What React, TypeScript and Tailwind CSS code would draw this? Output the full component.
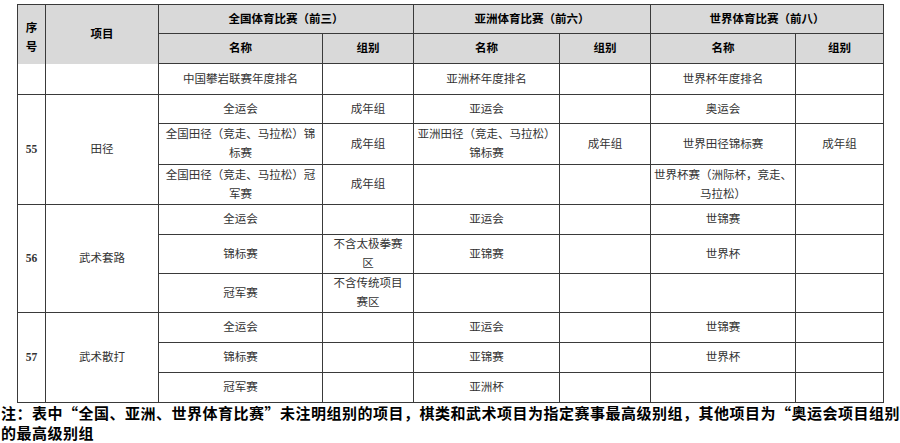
import React from 'react';

const body = "font-['Liberation_Serif','Noto_Sans_CJK_SC',serif]";

// one cell of the body, text centred, explicit line breaks
function Cell({
  lines,
  rowSpan,
  className = '',
}: {
  lines?: string[];
  rowSpan?: number;
  className?: string;
}) {
  return (
    <td
      rowSpan={rowSpan}
      className={`border border-[#3a3a3a] p-0 text-center align-middle whitespace-nowrap text-[11.5px] leading-[19px] text-[#333] ${className}`}
    >
      {lines?.map((l, i) => (
        <React.Fragment key={i}>
          {i > 0 && <br />}
          {l}
        </React.Fragment>
      ))}
    </td>
  );
}

function Head({
  children,
  rowSpan,
  colSpan,
  className = '',
}: {
  children: React.ReactNode;
  rowSpan?: number;
  colSpan?: number;
  className?: string;
}) {
  return (
    <th
      rowSpan={rowSpan}
      colSpan={colSpan}
      className={`border border-[#3a3a3a] bg-[#d9d9d9] text-center align-middle text-[11.5px] leading-[19px] font-bold text-black ${className}`}
    >
      {children}
    </th>
  );
}

export default function App() {
  return (
    <div className={`w-[900px] h-[443px] bg-white overflow-hidden ${body}`}>
      <table className="ml-[17px] mt-[4px] w-[866px] table-fixed border-collapse">
        <colgroup>
          <col className="w-[28px]" />
          <col className="w-[113px]" />
          <col className="w-[164px]" />
          <col className="w-[91px]" />
          <col className="w-[146px]" />
          <col className="w-[91px]" />
          <col className="w-[145px]" />
          <col className="w-[88px]" />
        </colgroup>
        <thead>
          <tr className="h-[29px]">
            <Head rowSpan={2} className="border-b-0 px-0 pt-[8px] pb-0">
              序<br />号
            </Head>
            <Head rowSpan={2} className="border-b-0 p-0">
              项目
            </Head>
            <Head colSpan={2} className="p-0">全国体育比赛（前三）</Head>
            <Head colSpan={2} className="p-0">亚洲体育比赛（前六）</Head>
            <Head colSpan={2} className="p-0">世界体育比赛（前八）</Head>
          </tr>
          <tr className="h-[30px]">
            <Head className="p-0">名称</Head>
            <Head className="p-0">组别</Head>
            <Head className="p-0">名称</Head>
            <Head className="p-0">组别</Head>
            <Head className="p-0">名称</Head>
            <Head className="p-0">组别</Head>
          </tr>
        </thead>
        <tbody>
          <tr className="h-[31px]">
            <Cell className="border-t-0" />
            <Cell className="border-t-0" />
            <Cell lines={['中国攀岩联赛年度排名']} />
            <Cell />
            <Cell lines={['亚洲杯年度排名']} />
            <Cell />
            <Cell lines={['世界杯年度排名']} />
            <Cell />
          </tr>

          {/* 55 田径 */}
          <tr className="h-[29px]">
            <Cell rowSpan={3} lines={['55']} className="font-bold" />
            <Cell rowSpan={3} lines={['田径']} />
            <Cell lines={['全运会']} />
            <Cell lines={['成年组']} />
            <Cell lines={['亚运会']} />
            <Cell />
            <Cell lines={['奥运会']} />
            <Cell />
          </tr>
          <tr className="h-[41px]">
            <Cell lines={['全国田径（竞走、马拉松）锦', '标赛']} />
            <Cell lines={['成年组']} />
            <Cell lines={['亚洲田径（竞走、马拉松）', '锦标赛']} />
            <Cell lines={['成年组']} />
            <Cell lines={['世界田径锦标赛']} />
            <Cell lines={['成年组']} />
          </tr>
          <tr className="h-[40px]">
            <Cell lines={['全国田径（竞走、马拉松）冠', '军赛']} />
            <Cell lines={['成年组']} />
            <Cell />
            <Cell />
            <Cell lines={['世界杯赛（洲际杯，竞走、', '马拉松）']} />
            <Cell />
          </tr>

          {/* 56 武术套路 */}
          <tr className="h-[30px]">
            <Cell rowSpan={3} lines={['56']} className="font-bold" />
            <Cell rowSpan={3} lines={['武术套路']} />
            <Cell lines={['全运会']} />
            <Cell />
            <Cell lines={['亚运会']} />
            <Cell />
            <Cell lines={['世锦赛']} />
            <Cell />
          </tr>
          <tr className="h-[39px]">
            <Cell lines={['锦标赛']} />
            <Cell lines={['不含太极拳赛', '区']} />
            <Cell lines={['亚锦赛']} />
            <Cell />
            <Cell lines={['世界杯']} />
            <Cell />
          </tr>
          <tr className="h-[39px]">
            <Cell lines={['冠军赛']} />
            <Cell lines={['不含传统项目', '赛区']} />
            <Cell />
            <Cell />
            <Cell />
            <Cell />
          </tr>

          {/* 57 武术散打 */}
          <tr className="h-[30px]">
            <Cell rowSpan={3} lines={['57']} className="font-bold" />
            <Cell rowSpan={3} lines={['武术散打']} />
            <Cell lines={['全运会']} />
            <Cell />
            <Cell lines={['亚运会']} />
            <Cell />
            <Cell lines={['世锦赛']} />
            <Cell />
          </tr>
          <tr className="h-[30px]">
            <Cell lines={['锦标赛']} />
            <Cell />
            <Cell lines={['亚锦赛']} />
            <Cell />
            <Cell lines={['世界杯']} />
            <Cell />
          </tr>
          <tr className="h-[30px]">
            <Cell lines={['冠军赛']} />
            <Cell />
            <Cell lines={['亚洲杯']} />
            <Cell />
            <Cell />
            <Cell />
          </tr>
        </tbody>
      </table>

      {/* Note */}
      <div className="pl-[1px] text-[15px] leading-[20px] tracking-[0.5px] font-bold text-black font-['Noto_Sans_CJK_SC',sans-serif]">
        <div className="whitespace-nowrap">
          注：表中“全国、亚洲、世界体育比赛”未注明组别的项目，棋类和武术项目为指定赛事最高级别组，其他项目为“奥运会项目组别
        </div>
        <div className="whitespace-nowrap">的最高级别组</div>
      </div>
    </div>
  );
}
